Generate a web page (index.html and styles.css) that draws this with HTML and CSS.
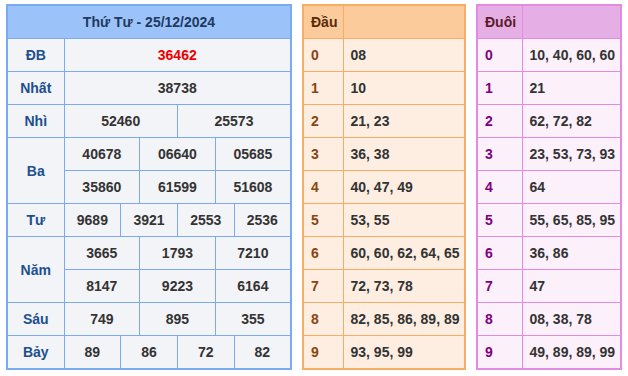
FILE: index.html
```html
<!DOCTYPE html>
<html lang="vi">
  <head>
    <meta charset="UTF-8" />
    <title>Kết quả xổ số</title>
    <link rel="stylesheet" href="styles.css">
  </head>
  <body>
    <div class="wrap">
      <table class="kq">
        <colgroup>
          <col class="kq-label" />
          <col /><col /><col /><col /><col /><col />
          <col /><col /><col /><col /><col /><col />
        </colgroup>
        <tr>
          <th colspan="13" class="kq-title">Thứ Tư - 25/12/2024</th>
        </tr>
        <tr>
          <td class="name">ĐB</td>
          <td colspan="12" class="special">36462</td>
        </tr>
        <tr>
          <td class="name">Nhất</td>
          <td colspan="12">38738</td>
        </tr>
        <tr>
          <td class="name">Nhì</td>
          <td colspan="6">52460</td>
          <td colspan="6">25573</td>
        </tr>
        <tr>
          <td class="name" rowspan="2">Ba</td>
          <td colspan="4">40678</td>
          <td colspan="4">06640</td>
          <td colspan="4">05685</td>
        </tr>
        <tr>
          <td colspan="4">35860</td>
          <td colspan="4">61599</td>
          <td colspan="4">51608</td>
        </tr>
        <tr>
          <td class="name">Tư</td>
          <td colspan="3">9689</td>
          <td colspan="3">3921</td>
          <td colspan="3">2553</td>
          <td colspan="3">2536</td>
        </tr>
        <tr>
          <td class="name" rowspan="2">Năm</td>
          <td colspan="4">3665</td>
          <td colspan="4">1793</td>
          <td colspan="4">7210</td>
        </tr>
        <tr>
          <td colspan="4">8147</td>
          <td colspan="4">9223</td>
          <td colspan="4">6164</td>
        </tr>
        <tr>
          <td class="name">Sáu</td>
          <td colspan="4">749</td>
          <td colspan="4">895</td>
          <td colspan="4">355</td>
        </tr>
        <tr>
          <td class="name">Bảy</td>
          <td colspan="3">89</td>
          <td colspan="3">86</td>
          <td colspan="3">72</td>
          <td colspan="3">82</td>
        </tr>
      </table>

      <table class="loto loto--dau">
        <colgroup><col class="col-num" /><col /></colgroup>
        <tr><th>Đầu</th><th></th></tr>
        <tr><td class="num">0</td><td>08</td></tr>
        <tr><td class="num">1</td><td>10</td></tr>
        <tr><td class="num">2</td><td>21, 23</td></tr>
        <tr><td class="num">3</td><td>36, 38</td></tr>
        <tr><td class="num">4</td><td>40, 47, 49</td></tr>
        <tr><td class="num">5</td><td>53, 55</td></tr>
        <tr><td class="num">6</td><td>60, 60, 62, 64, 65</td></tr>
        <tr><td class="num">7</td><td>72, 73, 78</td></tr>
        <tr><td class="num">8</td><td>82, 85, 86, 89, 89</td></tr>
        <tr><td class="num">9</td><td>93, 95, 99</td></tr>
      </table>

      <table class="loto loto--duoi">
        <colgroup><col class="col-num" /><col /></colgroup>
        <tr><th>Đuôi</th><th></th></tr>
        <tr><td class="num">0</td><td>10, 40, 60, 60</td></tr>
        <tr><td class="num">1</td><td>21</td></tr>
        <tr><td class="num">2</td><td>62, 72, 82</td></tr>
        <tr><td class="num">3</td><td>23, 53, 73, 93</td></tr>
        <tr><td class="num">4</td><td>64</td></tr>
        <tr><td class="num">5</td><td>55, 65, 85, 95</td></tr>
        <tr><td class="num">6</td><td>36, 86</td></tr>
        <tr><td class="num">7</td><td>47</td></tr>
        <tr><td class="num">8</td><td>08, 38, 78</td></tr>
        <tr><td class="num">9</td><td>49, 89, 89, 99</td></tr>
      </table>
    </div>
  </body>
</html>
```

FILE: styles.css
```css
body {
  margin: 0;
  background: #fff;
  font-family: "Liberation Sans", Arial, sans-serif;
  font-size: 14px;
  font-weight: bold;
  color: #333;
}
.wrap {
  display: flex;
  align-items: flex-start;
  gap: 10px;
  padding: 4px 6px;
}
table {
  border-collapse: collapse;
  table-layout: fixed;
}
td,
th {
  height: 32px;
  padding: 0;
  line-height: 16px;
  white-space: nowrap;
}

/* bang ket qua */
.kq {
  width: 286px;
  border: 2px solid #7aaaf2;
  background: #f3f4f8;
}
.kq-label {
  width: 57px;
}
.kq td,
.kq th {
  border: 1px solid #7aaaf2;
  text-align: center;
}
.kq-title {
  background: #9cc3f9;
  color: #1e3a5f;
  font-size: 14px;
}
.kq td.name {
  color: #1c4f8e;
}
.kq td.special {
  color: #ee0000;
}

/* loto dau / duoi */
.loto td,
.loto th {
  text-align: left;
  padding-left: 7px;
}
.loto--dau {
  width: 164px;
  border: 2px solid #f7ad66;
  background: #fdeee1;
}
.loto--dau .col-num {
  width: 40px;
}
.loto--dau td,
.loto--dau th {
  border: 1px solid #f7ad66;
}
.loto--dau th {
  background: #fbcb9c;
  color: #5a2a0a;
}
.loto--dau td.num {
  color: #8b4513;
}
.loto--duoi {
  width: 146px;
  border: 2px solid #e58ae1;
  background: #fcf0fa;
}
.loto--duoi .col-num {
  width: 45px;
}
.loto--duoi td,
.loto--duoi th {
  border: 1px solid #e58ae1;
}
.loto--duoi th {
  background: #e5afe6;
  color: #5a1c28;
}
.loto--duoi td.num {
  color: #800080;
}
```
